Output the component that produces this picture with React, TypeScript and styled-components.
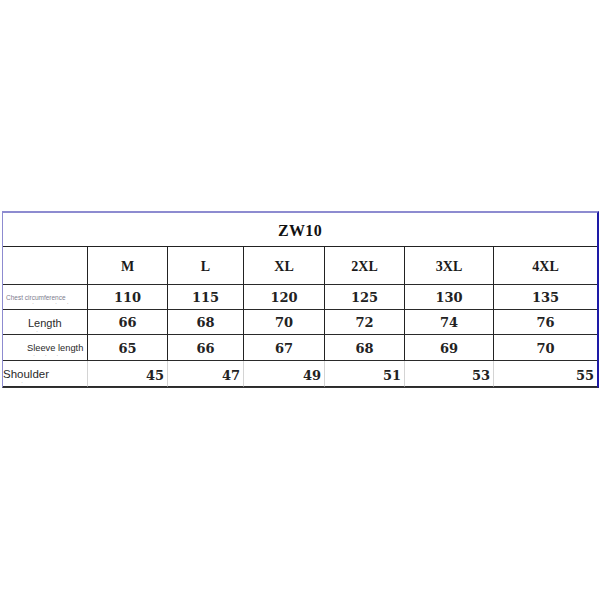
import React from "react";
import styled, { createGlobalStyle } from "styled-components";

const Global = createGlobalStyle`
  html, body { margin: 0; padding: 0; background: #fff; }
  body { width: 600px; height: 600px; overflow: hidden; }
`;

const Page = styled.div`
  padding: 211px 0 0 2px;
`;

const Table = styled.table`
  width: 596px;
  table-layout: fixed;
  border-collapse: separate;
  border-spacing: 0;
  border-top: 2px solid #8d8bd0;
  border-left: 1.5px solid #8d8bd0;
  border-right: 2px solid #1d1aa6;
  border-bottom: 1px solid #333;
`;

const Row = styled.tr<{ $h: number }>`
  height: ${(p) => p.$h}px;
`;

const Title = styled.td`
  text-align: center;
  vertical-align: middle;
  font-family: "Liberation Serif", serif;
  font-weight: bold;
  font-size: 16px;
  color: #111;
  letter-spacing: 0.3px;
  border-bottom: 1.5px solid #222;
  padding: 2px 0 0;
`;

const Cell = styled.td<{ $light?: boolean; $last?: boolean }>`
  box-sizing: border-box;
  padding: 0;
  border-right: ${(p) => (p.$last ? "none" : p.$light ? "1px solid #d4d4d4" : "1.5px solid #222")};
  border-bottom: 1.5px solid #2a2a2a;
  vertical-align: middle;
`;

const SizeCell = styled(Cell)`
  text-align: center;
  font-family: "Liberation Serif", serif;
  font-weight: bold;
  font-size: 14px;
  color: #1a1a1a;
  padding-top: 3px;
`;

const NumCell = styled(Cell)<{ $right?: boolean }>`
  text-align: ${(p) => (p.$right ? "right" : "center")};
  padding-right: ${(p) => (p.$right ? "3px" : "0")};
  padding-top: ${(p) => (p.$right ? "3px" : "1px")};
  font-family: "DejaVu Serif", serif;
  font-weight: bold;
  font-size: 13px;
  color: #222;
`;

const LabelCell = styled(Cell)<{ $indent: number }>`
  padding-left: ${(p) => p.$indent}px;
  padding-top: 2px;
  font-family: "Liberation Sans", Arial, sans-serif;
  color: #333;
  line-height: 1;
`;

const Label = styled.div<{ $size: number }>`
  font-size: ${(p) => p.$size}px;
  white-space: nowrap;
  color: ${(p) => (p.$size < 8 ? "#7d7d8e" : "#2a2a2a")};
`;

const Dots = styled.div<{ $pad: number }>`
  font-size: 6px;
  color: #888;
  padding-left: ${(p) => p.$pad}px;
  letter-spacing: 4px;
  line-height: 4px;
  height: 4px;
  margin-bottom: -4px;
  overflow: hidden;
  white-space: pre;
`;

const widths = [85, 80, 76, 81, 80, 89, 103];
const sizes = ["M", "L", "XL", "2XL", "3XL", "4XL"];

const rows = [
  { label: "Chest circumference", size: 6.5, indent: 3, dots: "·   · ·", dotPad: 26, h: 25, vals: [110, 115, 120, 125, 130, 135] },
  { label: "Length", size: 11, indent: 25, dots: "·", dotPad: 8, h: 25, vals: [66, 68, 70, 72, 74, 76] },
  { label: "Sleeve length", size: 9.3, indent: 24, dots: "· · ·", dotPad: 6, h: 26, vals: [65, 66, 67, 68, 69, 70] },
];

export default function App() {
  return (
    <>
      <Global />
      <Page>
        <Table>
          <colgroup>
            {widths.map((w, i) => (
              <col key={i} style={{ width: w }} />
            ))}
          </colgroup>
          <tbody>
            <Row $h={34}>
              <Title colSpan={7}>ZW10</Title>
            </Row>
            <Row $h={38}>
              <Cell />
              {sizes.map((s, i) => (
                <SizeCell key={s} $last={i === sizes.length - 1}>
                  {s}
                </SizeCell>
              ))}
            </Row>
            {rows.map((r) => (
              <Row key={r.label} $h={r.h}>
                <LabelCell $indent={r.indent}>
                  <Label $size={r.size}>{r.label}</Label>
                  <Dots $pad={r.dotPad}>{r.dots}</Dots>
                </LabelCell>
                {r.vals.map((v, i) => (
                  <NumCell key={i} $last={i === r.vals.length - 1}>
                    {v}
                  </NumCell>
                ))}
              </Row>
            ))}
            <Row $h={26}>
              <LabelCell $indent={0} $light>
                <Label $size={11.5}>Shoulder</Label>
                <Dots $pad={18}>·</Dots>
              </LabelCell>
              {[45, 47, 49, 51, 53, 55].map((v, i) => (
                <NumCell key={i} $right $light $last={i === 5}>
                  {v}
                </NumCell>
              ))}
            </Row>
          </tbody>
        </Table>
      </Page>
    </>
  );
}
